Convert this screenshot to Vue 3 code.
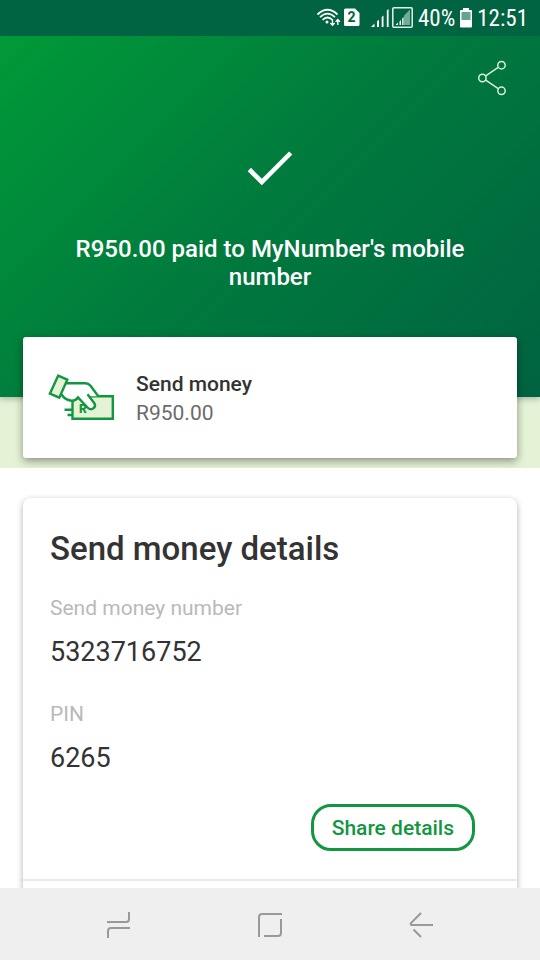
<script setup>
const details = [
  { label: 'Send money number', value: '5323716752' },
  { label: 'PIN', value: '6265' },
]
</script>

<template>
  <div class="screen">
    <header class="status">
      <svg class="status-wifi" viewBox="316 6 45 24" width="45" height="24" aria-hidden="true">
        <g fill="none" stroke="#fff" stroke-width="1.8">
          <path d="M317.5 14.5Q327.5 5 337.5 14.5" />
          <path d="M320 17.2Q327.5 10 335 17.2" />
          <path d="M322.6 19.8Q327.5 15.2 332.4 19.8" />
        </g>
        <circle cx="327" cy="22" r="1.5" fill="#fff" />
        <path d="M332.5 19.5V25M330.4 23L332.5 25.2L334.6 23M337.8 25V19.8M335.7 21.8L337.8 19.6L339.9 21.8" fill="none" stroke="#fff" stroke-width="1.4" />
        <path d="M345.5 8.5H355L359.5 13V24.5Q359.5 26 358 26H345.5Q344 26 344 24.5V10Q344 8.5 345.5 8.5Z" fill="#fff" />
        <text x="351.5" y="22.3" text-anchor="middle" class="sim">2</text>
      </svg>
      <svg viewBox="369 6 43 24" width="43" height="24" aria-hidden="true">
        <path d="M370 27L373.5 23.5V27ZM376 21.3L378 19.8V27H376ZM380.7 17L382.5 15.5V27H380.7ZM385.8 10.5L387.6 9V27H385.8Z" fill="#fff" />
        <rect x="391.8" y="7.8" width="19.4" height="19.4" rx="1" fill="none" stroke="#e4f1eb" stroke-width="1.5" />
        <path d="M403 15.5L409 9.5V25H403Z" fill="#6fae95" />
        <path d="M394.5 25L397 22.5V25ZM398.5 21.5L400 20V25H398.5ZM401.2 18.5L402.6 17V25H401.2Z" fill="#fff" />
      </svg>
      <span>40%</span>
      <svg viewBox="461 7 12 20" width="12" height="20" aria-hidden="true">
        <path d="M464 7H470V9H472Q473 9 473 10V25.5Q473 26.5 472 26.5H462Q461 26.5 461 25.5V10Q461 9 462 9H464Z" fill="#fff" />
        <path d="M462.5 11H471.5V19H462.5Z" fill="#62a58a" />
      </svg>
      <span>12:51</span>
    </header>

    <main class="content">
      <section class="hero">
        <button class="share" type="button" aria-label="Share">
          <svg viewBox="476 60 32 37" width="32" height="37" fill="none" stroke="#d7eee1" stroke-width="1.5">
            <circle cx="501.5" cy="65.2" r="3.7" />
            <circle cx="482.4" cy="78" r="3.7" />
            <circle cx="501.5" cy="90.8" r="3.7" />
            <path d="M485.7 75.8L498.2 67.4M485.7 80.2L498.2 88.6" />
          </svg>
        </button>
        <svg class="tick" viewBox="246 150 48 36" width="48" height="36" aria-hidden="true">
          <path d="M249.3 169.5L261.8 182L290.7 153" fill="none" stroke="#fff" stroke-width="4.6" />
        </svg>
        <h1>R950.00 paid to MyNumber's mobile number</h1>
      </section>

      <section class="band">
        <div class="card summary">
          <svg viewBox="48 374 68 50" width="68" height="50" fill="none" stroke="#12963f" stroke-width="2.4" aria-hidden="true">
            <path d="M72.5 396.2H112.8V418.8H72.5Z" fill="#e4f2d6" />
            <path d="M64.5 409.8H72M67.5 415H72" />
            <text x="79" y="413" class="note">R</text>
            <path d="M67 383.3H85.5Q88.5 383.3 90.5 385.8L98.3 396.2H89.5L94.3 403.2Q96 406 93.8 408Q90.5 410.6 87.5 407.5L78 397.5Q75.5 401 71.5 400.8Q65 400 61 393Z" fill="#fff" stroke="none" />
            <path d="M66 383.3H85.5Q88.5 383.3 90.5 385.8L98.3 396.2M87.5 394.3L94.3 403.2Q96 406 93.8 408Q90.5 410.6 87.5 407.5L78 397.5Q75.5 401 71.5 400.8Q65 400 61.5 394.5" />
            <path d="M58.1 375.7L67.3 379.7L59.3 397.7L49.9 393.7Z" fill="#e4f2d6" />
          </svg>
          <div>
            <h2>Send money</h2>
            <p>R950.00</p>
          </div>
        </div>
      </section>

      <section class="details-wrap">
        <article class="card details">
          <div class="details-body">
            <h2>Send money details</h2>
            <dl>
              <div v-for="item in details" :key="item.label">
                <dt>{{ item.label }}</dt>
                <dd>{{ item.value }}</dd>
              </div>
            </dl>
            <button class="share-details" type="button">Share details</button>
          </div>
          <div class="details-more"></div>
        </article>
      </section>
    </main>

    <nav class="navbar" aria-label="System navigation">
      <button type="button" aria-label="Recent apps">
        <svg viewBox="104 907 28 34" width="28" height="34">
          <path d="M129 912V919Q129 922 126 922H107M108 938V931Q108 928 111 928H130" />
        </svg>
      </button>
      <button type="button" aria-label="Home">
        <svg viewBox="256 907 28 34" width="28" height="34">
          <path d="M259 937V917Q259 914 262 914H282M281 919V933Q281 936 278 936H264" />
        </svg>
      </button>
      <button type="button" aria-label="Back">
        <svg viewBox="408 907 28 34" width="28" height="34">
          <path d="M421 913L411 923Q410 925 412 925H433M413.5 929.5L421 937" />
        </svg>
      </button>
    </nav>
  </div>
</template>

<style>
body {
  margin: 0;
}
</style>

<style scoped>
.screen {
  display: flex;
  flex-direction: column;
  height: 100vh;
  background: #fff;
  color: #333;
  font-family: Roboto, "Liberation Sans", sans-serif;
}
h1, h2, p, dl, dd {
  margin: 0;
}
svg {
  display: block;
  flex: none;
}
button {
  font: inherit;
  cursor: pointer;
}
.status {
  display: flex;
  flex: none;
  align-items: center;
  justify-content: flex-end;
  gap: 5px;
  height: 36px;
  padding: 0 12px;
  background: #006341;
  color: #fff;
  font-family: "Roboto Condensed", "Liberation Sans Narrow", Roboto, sans-serif;
  font-size: 23px;
}
.status-wifi {
  margin-right: 4px;
}
.sim {
  fill: #006341;
  font: 700 14px Roboto, sans-serif;
}
.content {
  flex: 1;
  min-height: 0;
  overflow: hidden;
}
.hero {
  position: relative;
  display: flex;
  flex-direction: column;
  align-items: center;
  padding: 16px 24px 106px;
  background: linear-gradient(135deg, #009a38 0%, #007a3d 48%, #006341 100%);
  box-shadow: 0 2px 6px rgba(0, 0, 0, 0.25);
  color: #fff;
}
.share {
  align-self: flex-end;
  padding: 8px;
  border: 0;
  background: none;
}
.tick {
  margin-top: 45px;
}
.hero h1 {
  max-width: 440px;
  margin-top: 49px;
  font-size: 24px;
  line-height: 28px;
  font-weight: 500;
  text-align: center;
}
.band {
  display: flow-root;
  padding: 0 23px 10px;
  background: #e4f2d6;
}
.card {
  position: relative;
  background: #fff;
}
.summary {
  display: flex;
  align-items: center;
  gap: 20px;
  margin-top: -60px;
  padding: 33px 25px 31px;
  border-radius: 3px;
  box-shadow: 0 3px 8px rgba(0, 0, 0, 0.4);
}
.summary h2 {
  font-size: 21px;
  line-height: 29px;
  font-weight: 500;
}
.summary p {
  color: #6b6b6b;
  font-size: 21px;
  line-height: 28px;
}
.note {
  fill: #12963f;
  stroke: none;
  font: 900 12px Roboto, sans-serif;
}
.details-wrap {
  position: relative;
  padding: 30px 23px;
  background: #fff;
}
.details {
  border-radius: 8px;
  box-shadow: 0 2px 6px rgba(0, 0, 0, 0.32);
}
.details-body {
  display: flex;
  flex-direction: column;
  padding: 31px 42px 28px 27px;
}
.details h2 {
  font-size: 33px;
  line-height: 40px;
  font-weight: 500;
}
dl {
  display: grid;
  gap: 34px;
  padding-top: 27px;
}
dt {
  color: #b9b9b9;
  font-size: 21px;
  line-height: 24px;
}
dd {
  padding-top: 16px;
  font-size: 27px;
  line-height: 32px;
}
.share-details {
  align-self: flex-end;
  margin-top: 30px;
  padding: 9px 18px 7px;
  border: 3px solid #12963f;
  border-radius: 20px;
  background: #fff;
  color: #12963f;
  font-size: 21px;
  line-height: 25px;
  font-weight: 500;
}
.details-more {
  min-height: 80px;
  border-top: 2px solid #ebebeb;
}
.navbar {
  position: relative;
  display: flex;
  flex: none;
  align-items: center;
  justify-content: space-between;
  height: 72px;
  padding: 0 96px;
  background: #efefef;
}
.navbar button {
  padding: 8px;
  border: 0;
  background: none;
}
.navbar path {
  fill: none;
  stroke: #999;
  stroke-width: 2;
}
</style>
